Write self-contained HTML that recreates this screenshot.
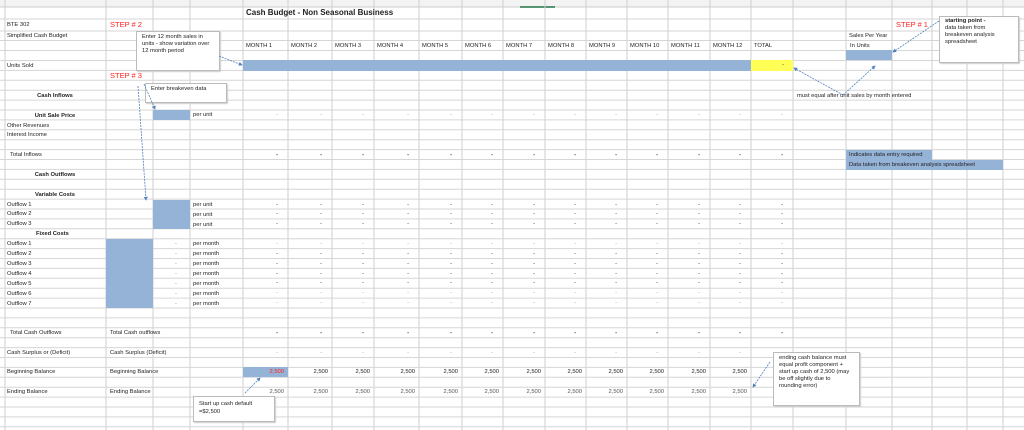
<!DOCTYPE html>
<html><head><meta charset="utf-8"><style>
*{margin:0;padding:0;box-sizing:border-box}
body{width:1024px;height:430px;overflow:hidden;background:#fff;font-family:"Liberation Sans",sans-serif;font-size:5.8px;color:#222;position:relative}
.a{position:absolute;white-space:nowrap;line-height:10px}
.grid{position:absolute;left:0;top:0;width:1024px;height:430px}
.b{position:absolute;background:#95b3d7}
.m{position:absolute;left:243px;display:grid;grid-template-columns:45px 44px 42px 45px 43px 41px 42px 41px 41px 41px 42px 41px 42px;height:10px;line-height:10px;white-space:nowrap}
.m i{font-style:normal;text-align:right;padding-right:10px;white-space:nowrap}
.m.h i{text-align:left;padding:0 0 0 3px}
.m.f i{color:#999}
.m.k i{font-weight:bold}
.box{position:absolute;background:#fff;border:1px solid #bbb;box-shadow:1px 1px 1px #ccc;padding:2px 5px;line-height:7px;font-size:5.8px}
.red{color:#f22;font-size:7.5px}
.c{text-align:center;width:100px;left:5px}
</style></head><body>
<svg class="grid" width="1024" height="430">
<rect x="0" y="0" width="1024" height="7" fill="#f3f3f3"/>
<line x1="0" y1="7" x2="1024" y2="7" stroke="#ccc" stroke-width="1"/>
<line x1="520" y1="7" x2="555" y2="7" stroke="#217346" stroke-width="1.5"/>
<g stroke="#d6d6d6" stroke-width="1">
<line x1="0" y1="19" x2="1024" y2="19"/><line x1="0" y1="31" x2="1024" y2="31"/><line x1="0" y1="40.5" x2="1024" y2="40.5"/><line x1="0" y1="50.5" x2="1024" y2="50.5"/>
</g>
<g stroke="#cfcfcf" stroke-width="1">
<line x1="5" y1="0" x2="5" y2="430"/><line x1="106" y1="0" x2="106" y2="430"/><line x1="153" y1="0" x2="153" y2="430"/><line x1="190" y1="0" x2="190" y2="430"/><line x1="243" y1="0" x2="243" y2="430"/><line x1="288" y1="0" x2="288" y2="430"/><line x1="332" y1="0" x2="332" y2="430"/><line x1="374" y1="0" x2="374" y2="430"/><line x1="419" y1="0" x2="419" y2="430"/><line x1="462" y1="0" x2="462" y2="430"/><line x1="503" y1="0" x2="503" y2="430"/><line x1="545" y1="0" x2="545" y2="430"/><line x1="586" y1="0" x2="586" y2="430"/><line x1="627" y1="0" x2="627" y2="430"/><line x1="668" y1="0" x2="668" y2="430"/><line x1="710" y1="0" x2="710" y2="430"/><line x1="751" y1="0" x2="751" y2="430"/><line x1="793" y1="0" x2="793" y2="430"/><line x1="846" y1="0" x2="846" y2="430"/><line x1="892" y1="0" x2="892" y2="430"/><line x1="932" y1="0" x2="932" y2="430"/><line x1="967" y1="0" x2="967" y2="430"/><line x1="1003" y1="0" x2="1003" y2="430"/>
</g>
<g stroke="#d6d6d6">
<line x1="0" y1="60.5" x2="1024" y2="60.5"/><line x1="0" y1="70.4" x2="1024" y2="70.4"/><line x1="0" y1="80.3" x2="1024" y2="80.3"/><line x1="0" y1="90.2" x2="1024" y2="90.2"/><line x1="0" y1="100.1" x2="1024" y2="100.1"/><line x1="0" y1="110" x2="1024" y2="110"/><line x1="0" y1="119.9" x2="1024" y2="119.9"/><line x1="0" y1="129.8" x2="1024" y2="129.8"/><line x1="0" y1="139.7" x2="1024" y2="139.7"/><line x1="0" y1="149.6" x2="1024" y2="149.6"/><line x1="0" y1="159.5" x2="1024" y2="159.5"/><line x1="0" y1="169.4" x2="1024" y2="169.4"/><line x1="0" y1="179.3" x2="1024" y2="179.3"/><line x1="0" y1="189.2" x2="1024" y2="189.2"/><line x1="0" y1="199.1" x2="1024" y2="199.1"/><line x1="0" y1="209" x2="1024" y2="209"/><line x1="0" y1="218.9" x2="1024" y2="218.9"/><line x1="0" y1="228.8" x2="1024" y2="228.8"/><line x1="0" y1="238.7" x2="1024" y2="238.7"/><line x1="0" y1="248.6" x2="1024" y2="248.6"/><line x1="0" y1="258.5" x2="1024" y2="258.5"/><line x1="0" y1="268.4" x2="1024" y2="268.4"/><line x1="0" y1="278.3" x2="1024" y2="278.3"/><line x1="0" y1="288.2" x2="1024" y2="288.2"/><line x1="0" y1="298.1" x2="1024" y2="298.1"/><line x1="0" y1="308" x2="1024" y2="308"/><line x1="0" y1="317.9" x2="1024" y2="317.9"/><line x1="0" y1="327.8" x2="1024" y2="327.8"/><line x1="0" y1="337.7" x2="1024" y2="337.7"/><line x1="0" y1="347.6" x2="1024" y2="347.6"/><line x1="0" y1="357.5" x2="1024" y2="357.5"/><line x1="0" y1="367.4" x2="1024" y2="367.4"/><line x1="0" y1="377.3" x2="1024" y2="377.3"/><line x1="0" y1="387.2" x2="1024" y2="387.2"/><line x1="0" y1="397.1" x2="1024" y2="397.1"/><line x1="0" y1="407" x2="1024" y2="407"/><line x1="0" y1="416.9" x2="1024" y2="416.9"/><line x1="0" y1="426.8" x2="1024" y2="426.8"/>
</g>
</svg>

<div class="b" style="left:243px;top:60px;width:508px;height:11px"></div>
<div class="b" style="left:751px;top:60px;width:42px;height:11px;background:#ffff55"></div>
<div class="a" style="left:782px;top:60px">-</div>
<div class="b" style="left:846px;top:50px;width:46px;height:10px"></div>
<div class="b" style="left:153px;top:110px;width:37px;height:10px"></div>
<div class="b" style="left:153px;top:200px;width:37px;height:29px"></div>
<div class="b" style="left:106px;top:239px;width:47px;height:69px"></div>
<div class="b" style="left:243px;top:367px;width:45px;height:10px"></div>
<div class="b" style="left:846px;top:150px;width:86px;height:10px"></div>
<div class="b" style="left:846px;top:160px;width:157px;height:10px"></div>
<div class="a" style="left:849px;top:150px">Indicates data entry required</div>
<div class="a" style="left:849px;top:160px">Data taken from breakeven analysis spreadsheet</div>

<div class="a" style="left:246px;top:7px;font-size:8px;font-weight:bold;line-height:12px">Cash Budget - Non Seasonal Business</div>
<div class="a" style="left:7px;top:20px">BTE 302</div>
<div class="a" style="left:7px;top:31px">Simplified Cash Budget</div>
<div class="a red" style="left:110px;top:19px;line-height:12px">STEP # 2</div>
<div class="a red" style="left:110px;top:71px">STEP # 3</div>
<div class="a red" style="left:896px;top:19px;line-height:12px">STEP # 1</div>
<div class="a" style="left:849px;top:31px">Sales Per Year</div>
<div class="a" style="left:850px;top:41px">In Units</div>

<div class="m h" style="top:41px"><i>MONTH 1</i><i>MONTH 2</i><i>MONTH 3</i><i>MONTH 4</i><i>MONTH 5</i><i>MONTH 6</i><i>MONTH 7</i><i>MONTH 8</i><i>MONTH 9</i><i>MONTH 10</i><i>MONTH 11</i><i>MONTH 12</i><i>TOTAL</i></div>

<div class="a" style="left:7px;top:61px">Units Sold</div>
<div class="a c" style="top:91px;font-weight:bold">Cash Inflows</div>
<div class="a c" style="top:111px;font-weight:bold">Unit Sale Price</div>
<div class="a" style="left:7px;top:121px">Other Revenues</div>
<div class="a" style="left:7px;top:130px">Interest Income</div>
<div class="a" style="left:10px;top:150px">Total Inflows</div>
<div class="a c" style="top:170px;font-weight:bold">Cash Outflows</div>
<div class="a c" style="top:190px;font-weight:bold">Variable Costs</div>
<div class="a" style="left:7px;top:200px">Outflow 1</div>
<div class="a" style="left:7px;top:209px">Outflow 2</div>
<div class="a" style="left:7px;top:219px">Outflow 3</div>
<div class="a" style="left:36px;top:229px;font-weight:bold">Fixed Costs</div>
<div class="a" style="left:7px;top:239px">Outflow 1<br>Outflow 2<br>Outflow 3<br>Outflow 4<br>Outflow 5<br>Outflow 6<br>Outflow 7</div>
<div class="a" style="left:10px;top:328px">Total Cash Outflows</div>
<div class="a" style="left:7px;top:348px">Cash Surplus or (Deficit)</div>
<div class="a" style="left:7px;top:367px">Beginning Balance</div>
<div class="a" style="left:7px;top:387px">Ending Balance</div>
<div class="a" style="left:110px;top:328px">Total Cash outflows</div>
<div class="a" style="left:110px;top:348px">Cash Surplus (Deficit)</div>
<div class="a" style="left:110px;top:367px">Beginning Balance</div>
<div class="a" style="left:110px;top:387px">Ending Balance</div>

<div class="a" style="left:193px;top:110px">per unit</div>
<div class="a" style="left:193px;top:200px">per unit<br>per unit<br>per unit</div>
<div class="a" style="left:193px;top:239px">per month<br>per month<br>per month<br>per month<br>per month<br>per month<br>per month</div>
<div class="a" style="left:175px;top:239px;color:#888">-<br>-<br>-<br>-<br>-<br>-<br>-</div>

<div class="m f" style="top:110px"><i>-</i><i>-</i><i>-</i><i>-</i><i>-</i><i>-</i><i>-</i><i>-</i><i>-</i><i>-</i><i>-</i><i>-</i><i>-</i></div>
<div class="m k" style="top:150px"><i>-</i><i>-</i><i>-</i><i>-</i><i>-</i><i>-</i><i>-</i><i>-</i><i>-</i><i>-</i><i>-</i><i>-</i><i>-</i></div>
<div class="m" style="top:200px"><i>-</i><i>-</i><i>-</i><i>-</i><i>-</i><i>-</i><i>-</i><i>-</i><i>-</i><i>-</i><i>-</i><i>-</i><i>-</i></div>
<div class="m" style="top:209px"><i>-</i><i>-</i><i>-</i><i>-</i><i>-</i><i>-</i><i>-</i><i>-</i><i>-</i><i>-</i><i>-</i><i>-</i><i>-</i></div>
<div class="m" style="top:219px"><i>-</i><i>-</i><i>-</i><i>-</i><i>-</i><i>-</i><i>-</i><i>-</i><i>-</i><i>-</i><i>-</i><i>-</i><i>-</i></div>
<div class="m f" style="top:239px"><i>-</i><i>-</i><i>-</i><i>-</i><i>-</i><i>-</i><i>-</i><i>-</i><i>-</i><i>-</i><i>-</i><i>-</i><i>-</i></div>
<div class="m" style="top:249px"><i>-</i><i>-</i><i>-</i><i>-</i><i>-</i><i>-</i><i>-</i><i>-</i><i>-</i><i>-</i><i>-</i><i>-</i><i>-</i></div>
<div class="m" style="top:259px"><i>-</i><i>-</i><i>-</i><i>-</i><i>-</i><i>-</i><i>-</i><i>-</i><i>-</i><i>-</i><i>-</i><i>-</i><i>-</i></div>
<div class="m" style="top:269px"><i>-</i><i>-</i><i>-</i><i>-</i><i>-</i><i>-</i><i>-</i><i>-</i><i>-</i><i>-</i><i>-</i><i>-</i><i>-</i></div>
<div class="m" style="top:278px"><i>-</i><i>-</i><i>-</i><i>-</i><i>-</i><i>-</i><i>-</i><i>-</i><i>-</i><i>-</i><i>-</i><i>-</i><i>-</i></div>
<div class="m f" style="top:288px"><i>-</i><i>-</i><i>-</i><i>-</i><i>-</i><i>-</i><i>-</i><i>-</i><i>-</i><i>-</i><i>-</i><i>-</i><i>-</i></div>
<div class="m f" style="top:298px"><i>-</i><i>-</i><i>-</i><i>-</i><i>-</i><i>-</i><i>-</i><i>-</i><i>-</i><i>-</i><i>-</i><i>-</i><i>-</i></div>
<div class="m k" style="top:328px"><i>-</i><i>-</i><i>-</i><i>-</i><i>-</i><i>-</i><i>-</i><i>-</i><i>-</i><i>-</i><i>-</i><i>-</i><i>-</i></div>
<div class="m f" style="top:348px"><i>-</i><i>-</i><i>-</i><i>-</i><i>-</i><i>-</i><i>-</i><i>-</i><i>-</i><i>-</i><i>-</i><i>-</i><i>-</i></div>
<div class="m" style="top:367px;grid-template-columns:45px 44px 42px 45px 43px 41px 42px 41px 41px 41px 42px 41px"><i style="color:#f22;padding-right:4px">2,500</i><i style="padding-right:4px">2,500</i><i style="padding-right:4px">2,500</i><i style="padding-right:4px">2,500</i><i style="padding-right:4px">2,500</i><i style="padding-right:4px">2,500</i><i style="padding-right:4px">2,500</i><i style="padding-right:4px">2,500</i><i style="padding-right:4px">2,500</i><i style="padding-right:4px">2,500</i><i style="padding-right:4px">2,500</i><i style="padding-right:4px">2,500</i></div>
<div class="m" style="top:387px;color:#555;grid-template-columns:45px 44px 42px 45px 43px 41px 42px 41px 41px 41px 42px 41px"><i style="padding-right:4px">2,500</i><i style="padding-right:4px">2,500</i><i style="padding-right:4px">2,500</i><i style="padding-right:4px">2,500</i><i style="padding-right:4px">2,500</i><i style="padding-right:4px">2,500</i><i style="padding-right:4px">2,500</i><i style="padding-right:4px">2,500</i><i style="padding-right:4px">2,500</i><i style="padding-right:4px">2,500</i><i style="padding-right:4px">2,500</i><i style="padding-right:4px">2,500</i></div>

<div class="a" style="left:797px;top:91px">must equal after unit sales by month entered</div>

<div class="box" style="left:136px;top:31px;width:84px;height:40px">Enter 12 month sales in units - show variation over 12 month period</div>
<div class="box" style="left:145px;top:83px;width:82px;height:20px">Enter breakeven data</div>
<div class="box" style="left:939px;top:16px;width:80px;height:47px;padding-top:1px"><b>starting point -</b><br>data taken from breakeven analysis spreadsheet</div>
<div class="box" style="left:193px;top:396px;width:82px;height:26px;padding-top:3px;line-height:8px">Start up cash default<br>=$2,500</div>
<div class="box" style="left:773px;top:352px;width:87px;height:54px;padding-top:2px">ending cash balance must equal profit component + start up cash of 2,500 (may be off slightly due to rounding error)</div>

<svg class="grid" width="1024" height="430" style="pointer-events:none">
<defs><marker id="ar" markerWidth="5" markerHeight="5" refX="4" refY="2.5" orient="auto"><path d="M0,0 L5,2.5 L0,5z" fill="#4f81bd"/></marker></defs>
<g stroke="#4f81bd" stroke-width="0.8" stroke-dasharray="2,1" fill="none" marker-end="url(#ar)">
<line x1="219" y1="56" x2="242" y2="65"/>
<line x1="138" y1="86" x2="146" y2="200"/>
<line x1="144" y1="84" x2="155" y2="109"/>
<line x1="843" y1="95" x2="794" y2="68"/>
<line x1="843" y1="95" x2="875" y2="66"/>
<line x1="939" y1="21" x2="893" y2="52"/>
<line x1="245" y1="393" x2="260" y2="378"/>
<line x1="770" y1="362" x2="753" y2="387"/>
</g>
</svg>
</body></html>
